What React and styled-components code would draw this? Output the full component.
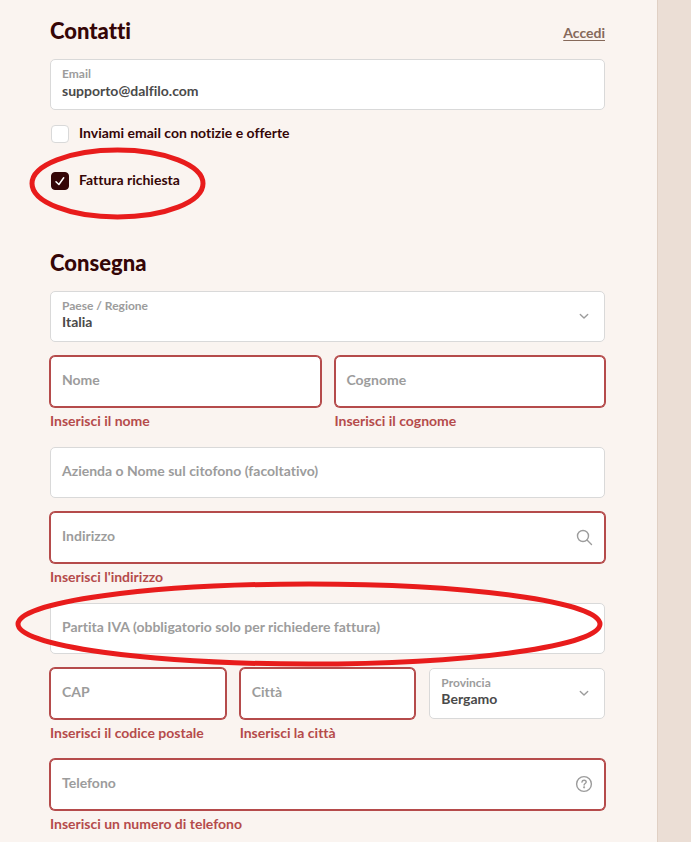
import React, { useId, useState } from "react";
import styled, { createGlobalStyle, css } from "styled-components";

const colors = {
  page: "#faf4f0",
  side: "#ebded5",
  sideBorder: "#e0d0c4",
  ink: "#350607",
  text: "#4a4a4a",
  muted: "#9c9c9c",
  line: "#d9d9d9",
  error: "#b54b4b",
  link: "#86695a",
  mark: "#e81c1c",
};

const GlobalStyle = createGlobalStyle`
  *, *::before, *::after { box-sizing: border-box; }
  body {
    margin: 0;
    background: ${colors.page};
    color: ${colors.ink};
    font: 700 14px/20px Lato, "Open Sans", sans-serif;
    font-variant-ligatures: none;
  }
`;

const Page = styled.div`
  display: grid;
  grid-template-columns: minmax(0, 1fr) 34px;
  min-height: 100vh;
`;

const Main = styled.main`
  padding: 16px 52px 6px 50px;
`;

const Sidebar = styled.aside`
  background: ${colors.side};
  border-left: 1px solid ${colors.sideBorder};
`;

const Section = styled.section`
  & + & {
    margin-top: 57px;
  }
`;

const SectionHeader = styled.header`
  display: flex;
  align-items: center;
  justify-content: space-between;
  margin-bottom: 13px;
`;

const Title = styled.h2`
  margin: 0;
  font-size: 22px;
  line-height: 30px;
  font-weight: 900;
`;

const LoginLink = styled.a`
  color: ${colors.link};
  padding-top: 4px;
  text-underline-offset: 2px;
`;

const Fields = styled.div`
  display: grid;
  gap: 14px;
`;

const Row = styled.div`
  display: grid;
  grid-template-columns: repeat(${(p) => p.$columns}, minmax(0, 1fr));
  align-items: start;
  gap: 14px;
`;

const Field = styled.div`
  position: relative;
`;

const Box = styled.div`
  display: grid;
  grid-template-rows: 49px;
  background: #fff;
  border: 1px solid ${colors.line};
  border-radius: 5px;

  & > * {
    grid-area: 1 / 1;
    min-width: 0;
  }

  ${(p) =>
    p.$invalid &&
    css`
      border-color: ${colors.error};
      box-shadow: 0 0 0 1px ${colors.error};
    `}
`;

const Label = styled.label`
  z-index: 1;
  align-self: center;
  padding: 0 11px 3px;
  color: ${colors.muted};
  pointer-events: none;

  ${(p) =>
    p.$floating &&
    css`
      align-self: start;
      padding: 6px 11px 0;
      font-size: 12px;
      line-height: 16px;
    `}
`;

const controlStyles = css`
  width: 100%;
  height: 100%;
  padding: 11px 40px 0 11px;
  border: 0;
  border-radius: 5px;
  background: transparent;
  color: ${colors.text};
  font: inherit;
  font-variant-ligatures: none;
  outline: none;
`;

const TextInput = styled.input`
  ${controlStyles}
`;

const Select = styled.select`
  ${controlStyles}
  appearance: none;
`;

const IconSlot = styled.span`
  display: flex;
  align-self: center;
  justify-self: end;
  margin-right: 11px;
  padding-bottom: 1px;
  color: ${colors.muted};
  pointer-events: none;
`;

const ErrorText = styled.p`
  margin: 0;
  padding: 4px 0 2px;
  color: ${colors.error};
`;

const Options = styled.div`
  display: grid;
  justify-items: start;
  gap: 27px;
  margin-top: 14px;
`;

const Option = styled.div`
  position: relative;
  display: flex;
  align-items: center;
  gap: 10px;
  padding-left: 1px;
`;

const OptionLabel = styled.label`
  line-height: 18px;
  padding-bottom: 2px;
`;

const Tick = styled.span`
  display: grid;

  & > * {
    grid-area: 1 / 1;
  }

  & > svg {
    pointer-events: none;
  }
`;

const Checkbox = styled.input`
  appearance: none;
  width: 18px;
  height: 18px;
  margin: 0;
  background: #fff;
  border: 1px solid ${colors.line};
  border-radius: 4px;

  &:checked {
    background: ${colors.ink};
    border-color: ${colors.ink};
  }
`;

const MarkSvg = styled.svg`
  position: absolute;
  z-index: 2;
  overflow: visible;
  pointer-events: none;
  fill: none;
  stroke: ${colors.mark};
  stroke-width: 5px;
`;

const OptionMark = styled(MarkSvg)`
  left: -18px;
  top: -21px;
  width: 171px;
  height: 67px;
`;

const FieldMark = styled(MarkSvg)`
  left: -32px;
  top: -19px;
  width: calc(100% + 27px);
  height: 80px;
`;

const Ring = () => <ellipse cx="50%" cy="50%" rx="50%" ry="50%" />;

const Icon = ({ children }) => (
  <svg
    width="18"
    height="18"
    viewBox="0 0 18 18"
    fill="none"
    stroke="currentColor"
    strokeWidth="1.4"
    strokeLinecap="round"
    strokeLinejoin="round"
    aria-hidden="true"
  >
    {children}
  </svg>
);

const ChevronIcon = () => (
  <Icon>
    <path d="M5.3 7.5 9 11 12.7 7.5" />
  </Icon>
);

const SearchIcon = () => (
  <Icon>
    <circle cx="8" cy="8" r="5.5" />
    <path d="M12 12 16.5 16.5" />
  </Icon>
);

const HelpIcon = () => (
  <Icon>
    <circle cx="9" cy="9" r="7.4" />
    <path d="M6.9 7.1C7.1 5.9 8 5.2 9.1 5.2c1.2 0 2.1.8 2.1 1.8 0 1.5-2.1 1.5-2.1 3" />
    <circle cx="9.1" cy="12.3" r=".4" fill="currentColor" />
  </Icon>
);

function TextField({ label, type = "text", initial = "", error, icon, children }) {
  const id = useId();
  const [value, setValue] = useState(initial);
  return (
    <Field>
      <Box $invalid={Boolean(error)}>
        <Label htmlFor={id} $floating={value !== ""}>
          {label}
        </Label>
        <TextInput
          id={id}
          type={type}
          value={value}
          onChange={(e) => setValue(e.target.value)}
          aria-invalid={Boolean(error)}
          aria-describedby={error ? `${id}-error` : undefined}
        />
        {icon && <IconSlot>{icon}</IconSlot>}
      </Box>
      {error && <ErrorText id={`${id}-error`}>{error}</ErrorText>}
      {children}
    </Field>
  );
}

function SelectField({ label, option }) {
  const id = useId();
  return (
    <Field>
      <Box>
        <Label htmlFor={id} $floating>
          {label}
        </Label>
        <Select id={id}>
          <option>{option}</option>
        </Select>
        <IconSlot>
          <ChevronIcon />
        </IconSlot>
      </Box>
    </Field>
  );
}

function CheckOption({ label, initial = false, children }) {
  const id = useId();
  const [checked, setChecked] = useState(initial);
  return (
    <Option>
      <Tick>
        <Checkbox
          id={id}
          type="checkbox"
          checked={checked}
          onChange={(e) => setChecked(e.target.checked)}
        />
        {checked && (
          <svg
            width="18"
            height="18"
            viewBox="0 0 18 18"
            fill="none"
            stroke="#fff"
            strokeWidth="1.5"
            strokeLinecap="round"
            strokeLinejoin="round"
            aria-hidden="true"
          >
            <path d="M5 9.7 7.9 12.5 12.7 5.8" />
          </svg>
        )}
      </Tick>
      <OptionLabel htmlFor={id}>{label}</OptionLabel>
      {children}
    </Option>
  );
}

export default function App() {
  return (
    <>
      <GlobalStyle />
      <Page>
        <Main>
          <Section>
            <SectionHeader>
              <Title>Contatti</Title>
              <LoginLink href="#accedi">Accedi</LoginLink>
            </SectionHeader>
            <TextField label="Email" type="email" initial="supporto@dalfilo.com" />
            <Options>
              <CheckOption label="Inviami email con notizie e offerte" />
              <CheckOption label="Fattura richiesta" initial>
                <OptionMark aria-hidden="true">
                  <Ring />
                </OptionMark>
              </CheckOption>
            </Options>
          </Section>
          <Section>
            <SectionHeader>
              <Title>Consegna</Title>
            </SectionHeader>
            <Fields>
              <SelectField label="Paese / Regione" option="Italia" />
              <Row $columns={2}>
                <TextField label="Nome" error="Inserisci il nome" />
                <TextField label="Cognome" error="Inserisci il cognome" />
              </Row>
              <TextField label="Azienda o Nome sul citofono (facoltativo)" />
              <TextField label="Indirizzo" error="Inserisci l'indirizzo" icon={<SearchIcon />} />
              <TextField label="Partita IVA (obbligatorio solo per richiedere fattura)">
                <FieldMark aria-hidden="true">
                  <Ring />
                </FieldMark>
              </TextField>
              <Row $columns={3}>
                <TextField label="CAP" error="Inserisci il codice postale" />
                <TextField label="Città" error="Inserisci la città" />
                <SelectField label="Provincia" option="Bergamo" />
              </Row>
              <TextField
                label="Telefono"
                type="tel"
                error="Inserisci un numero di telefono"
                icon={<HelpIcon />}
              />
            </Fields>
          </Section>
        </Main>
        <Sidebar />
      </Page>
    </>
  );
}
